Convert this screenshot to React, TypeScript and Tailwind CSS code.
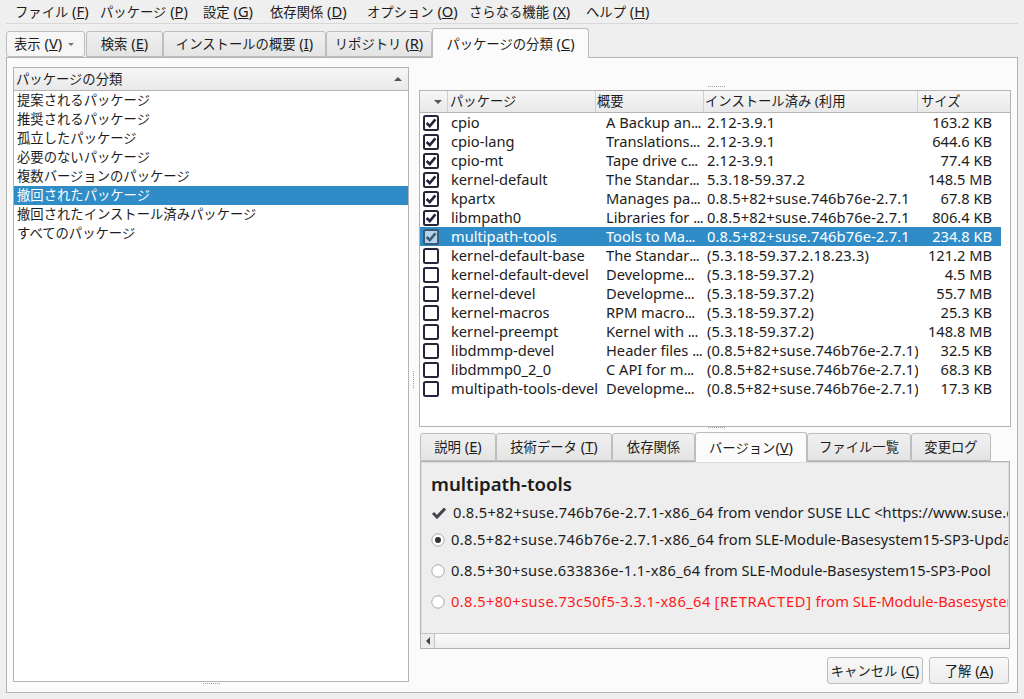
import React from 'react';

const rows = [
  { on: true, name: 'cpio', sum: 'A Backup an', ver: '2.12-3.9.1', size: '163.2 KB' },
  { on: true, name: 'cpio-lang', sum: 'Translations', ver: '2.12-3.9.1', size: '644.6 KB' },
  { on: true, name: 'cpio-mt', sum: 'Tape drive c', ver: '2.12-3.9.1', size: '77.4 KB' },
  { on: true, name: 'kernel-default', sum: 'The Standar', ver: '5.3.18-59.37.2', size: '148.5 MB' },
  { on: true, name: 'kpartx', sum: 'Manages pa', ver: '0.8.5+82+suse.746b76e-2.7.1', size: '67.8 KB' },
  { on: true, name: 'libmpath0', sum: 'Libraries for ', ver: '0.8.5+82+suse.746b76e-2.7.1', size: '806.4 KB' },
  { on: true, sel: true, name: 'multipath-tools', sum: 'Tools to Ma', ver: '0.8.5+82+suse.746b76e-2.7.1', size: '234.8 KB' },
  { on: false, name: 'kernel-default-base', sum: 'The Standar', ver: '(5.3.18-59.37.2.18.23.3)', size: '121.2 MB' },
  { on: false, name: 'kernel-default-devel', sum: 'Developme', ver: '(5.3.18-59.37.2)', size: '4.5 MB' },
  { on: false, name: 'kernel-devel', sum: 'Developme', ver: '(5.3.18-59.37.2)', size: '55.7 MB' },
  { on: false, name: 'kernel-macros', sum: 'RPM macro', ver: '(5.3.18-59.37.2)', size: '25.3 KB' },
  { on: false, name: 'kernel-preempt', sum: 'Kernel with ', ver: '(5.3.18-59.37.2)', size: '148.8 MB' },
  { on: false, name: 'libdmmp-devel', sum: 'Header files ', ver: '(0.8.5+82+suse.746b76e-2.7.1)', size: '32.5 KB' },
  { on: false, name: 'libdmmp0_2_0', sum: 'C API for m', ver: '(0.8.5+82+suse.746b76e-2.7.1)', size: '68.3 KB' },
  { on: false, name: 'multipath-tools-devel', sum: 'Developme', ver: '(0.8.5+82+suse.746b76e-2.7.1)', size: '17.3 KB' },
];

const filters = [
  '提案されるパッケージ',
  '推奨されるパッケージ',
  '孤立したパッケージ',
  '必要のないパッケージ',
  '複数バージョンのパッケージ',
  '撤回されたパッケージ',
  '撤回されたインストール済みパッケージ',
  'すべてのパッケージ',
];

// the CJK fallback renders smaller than the latin text in the reference
function J({ children }: { children: React.ReactNode }) {
  return <span className="text-[13.33px]">{children}</span>;
}

function Check({ on, sel }: { on: boolean; sel?: boolean }) {
  return (
    <svg width="16" height="16" viewBox="0 0 16 16" className="block">
      <rect x="1" y="1" width="14" height="14" rx="1.5" fill={sel ? '#b5d3e8' : '#fff'} stroke={sel ? '#3a5a78' : '#25253a'} strokeWidth="2" />
      {on && <path d="M3.6 8 L6.8 11 L12.4 4.4" fill="none" stroke={sel ? '#3a5a78' : '#25253a'} strokeWidth="2.6" />}
    </svg>
  );
}

function Radio({ on }: { on?: boolean }) {
  return (
    <svg width="14" height="14" viewBox="0 0 14 14" className="block shrink-0">
      <circle cx="7" cy="7" r="6.2" fill="#fff" stroke="#a8a8a8" />
      {on && <circle cx="7" cy="7" r="3" fill="#333" />}
    </svg>
  );
}

function Tab({ w, active, tall, children }: { w: string; active?: boolean; tall?: boolean; children: React.ReactNode }) {
  return (
    <div className={`${w} ${active ? 'h-[30px] bg-[#fbfbfb] border-b-0 z-10 -mb-px' : `${tall ? 'h-[28px]' : 'h-[26px]'} bg-gradient-to-b from-[#f0f0f0] to-[#e4e4e4]`} flex items-center justify-center border border-[#bdbdbd] rounded-t-[3px] whitespace-nowrap`}>
      {children}
    </div>
  );
}

function Dots({ className }: { className: string }) {
  return <div className={`absolute h-px w-[17px] border-t border-dotted border-[#a0a0a0] ${className}`} />;
}

export default function App() {
  return (
    <div className="relative flex h-[699px] w-[1024px] flex-col overflow-hidden bg-[#efefef] text-[14.67px] leading-[19px] text-[#1c1c1c] [font-family:'Noto_Sans','Noto_Sans_CJK_JP',sans-serif]">
      {/* menu bar */}
      <div className="mx-[6px] flex h-[24px] items-center whitespace-nowrap border-b border-[#d8d8d8] pl-[9px]">
        <span className="w-[85px]"><J>ファイル</J> (<u>F</u>)</span>
        <span className="w-[103px]"><J>パッケージ</J> (<u>P</u>)</span>
        <span className="w-[67px]"><J>設定</J> (<u>G</u>)</span>
        <span className="w-[97px]"><J>依存関係</J> (<u>D</u>)</span>
        <span className="w-[102px]"><J>オプション</J> (<u>O</u>)</span>
        <span className="w-[117px]"><J>さらなる機能</J> (<u>X</u>)</span>
        <span><J>ヘルプ</J> (<u>H</u>)</span>
      </div>

      {/* top tabs */}
      <div className="relative z-10 ml-[6px] mt-[3px] flex h-[30px] items-end">
        <div className="mr-px flex h-[26px] w-[79px] items-center rounded-[3px] border border-[#bdbdbd] bg-[#f6f6f6] pl-[7px]">
          <span><J>表示</J> (<u>V</u>)</span>
          <span className="ml-[6px] h-0 w-0 border-x-[3px] border-t-[3px] border-x-transparent border-t-[#777]" />
        </div>
        <Tab w="w-[77px]"><span><J>検索</J> (<u>E</u>)</span></Tab>
        <Tab w="w-[163px]"><span><J>インストールの概要</J> (<u>I</u>)</span></Tab>
        <Tab w="w-[106px]"><span><J>リポジトリ</J> (<u>R</u>)</span></Tab>
        <Tab w="w-[157px]" active><span><J>パッケージの分類</J> (<u>C</u>)</span></Tab>
      </div>

      {/* main panel */}
      <div className="relative mx-[6px] flex h-[636px] gap-[10px] border border-[#b4b4b4] bg-[#fbfbfb] pl-[6px] pt-[9px]">
        <div className="flex h-[615px] w-[396px] shrink-0 flex-col border border-[#b4b4b4] bg-white text-[13.33px]">
          <div className="flex h-[23px] shrink-0 items-center justify-between border-b border-[#b4b4b4] bg-gradient-to-b from-[#f6f6f6] to-[#e9e9e9] pl-[2px] pr-[6px]">
            パッケージの分類
            <span className="h-0 w-0 border-x-[4px] border-b-[4px] border-x-transparent border-b-[#555]" />
          </div>
          {filters.map((f, i) => (
            <div key={f} className={`h-[19px] pl-[3px] ${i === 5 ? 'bg-[#308cc6] text-white' : ''}`}>{f}</div>
          ))}
        </div>

        <div className="flex w-[592px] shrink-0 flex-col pt-[23px]">
          {/* package table */}
          <div className="h-[337px] shrink-0 border border-[#b4b4b4] bg-white">
            <div className="flex h-[22px] items-stretch border-b border-[#b4b4b4] bg-gradient-to-b from-[#f6f6f6] to-[#e9e9e9] text-[13.33px] leading-[21px]">
              <div className="flex w-[28px] items-center justify-end border-r border-[#d0d0d0] pr-[5px]">
                <span className="h-0 w-0 border-x-[4px] border-t-[4px] border-x-transparent border-t-[#555]" />
              </div>
              <div className="w-[148px] border-r border-[#d0d0d0] pl-[2px]">パッケージ</div>
              <div className="w-[108px] border-r border-[#d0d0d0] pl-px">概要</div>
              <div className="w-[214px] overflow-hidden whitespace-nowrap border-r border-[#d0d0d0] pl-px">インストール済み (利用</div>
              <div className="flex-1 pl-[3px]">サイズ</div>
            </div>
            {rows.map((r) => (
              <div key={r.name} className={`flex h-[19px] w-[581px] items-center whitespace-pre ${r.sel ? 'bg-[#308cc6] text-white' : ''}`}>
                <div className="w-[31px] shrink-0 pl-[3px]"><Check on={r.on} sel={r.sel} /></div>
                <div className="w-[155px] shrink-0">{r.name}</div>
                <div className="w-[101px] shrink-0 overflow-hidden">{r.sum}<span className="tracking-[-0.6px]">...</span></div>
                <div className="w-[211px] shrink-0 overflow-hidden tracking-[0.15px]">{r.ver}</div>
                <div className="flex-1 pr-[9px] text-right">{r.size}</div>
              </div>
            ))}
          </div>

          {/* detail tabs */}
          <div className="relative z-10 ml-px mt-[5px] flex h-[29px] items-end">
            <Tab w="w-[76px]" tall><span><J>説明</J> (<u>E</u>)</span></Tab>
            <Tab w="w-[116px]" tall><span><J>技術データ</J> (<u>T</u>)</span></Tab>
            <Tab w="w-[83px]" tall><J>依存関係</J></Tab>
            <Tab w="w-[112px]" active><span><J>バージョン</J>(<u>V</u>)</span></Tab>
            <Tab w="w-[104px]" tall><J>ファイル一覧</J></Tab>
            <Tab w="w-[80px]" tall><J>変更ログ</J></Tab>
          </div>

          {/* detail panel */}
          <div className="ml-px flex h-[188px] w-[590px] flex-col border border-[#b4b4b4] bg-[#eeeeee] shadow-[inset_0_0_0_1px_#dedede]">
            <div className="mr-px flex-1 overflow-hidden whitespace-nowrap pl-[10px]">
              <div className="mt-[10px] text-[18.67px] font-semibold leading-[24px]">multipath-tools</div>
              <div className="mt-[7px] flex h-[19px] items-center gap-[7px] pl-px">
                <svg width="14" height="12" viewBox="0 0 14 12" className="block shrink-0">
                  <path d="M1 6 L5 10 L13 1.5" fill="none" stroke="#44444f" strokeWidth="3" />
                </svg>
                <span><span className="tracking-[0.28px]">0.8.5+82+suse.746b76e-2.7.1-x86_64</span> from vendor SUSE LLC &lt;https://www.suse.com/&gt;</span>
              </div>
              <div className="mt-[8px] flex h-[19px] items-center gap-[6px]"><Radio on /><span><span className="tracking-[0.35px]">0.8.5+82+suse.746b76e-2.7.1-x86_64</span> from SLE-Module-Basesystem15-SP3-Updates</span></div>
              <div className="mt-[12px] flex h-[19px] items-center gap-[6px]"><Radio /><span><span className="tracking-[0.35px]">0.8.5+30+suse.633836e-1.1-x86_64</span> from SLE-Module-Basesystem15-SP3-Pool</span></div>
              <div className="mt-[12px] flex h-[19px] items-center gap-[6px] text-[#ff1a1a]"><Radio /><span><span className="tracking-[0.4px]">0.8.5+80+suse.73c50f5-3.3.1-x86_64</span> <span className="tracking-[0.7px]">[RETRACTED]</span> from SLE-Module-Basesystem15-SP3-Updates</span></div>
            </div>
            <div className="flex h-[15px] shrink-0 border-t border-[#c4c4c4] bg-[#ececec]">
              <div className="flex w-[14px] items-center justify-center border-r border-[#c4c4c4]">
                <span className="h-0 w-0 border-y-[4px] border-r-[4px] border-y-transparent border-r-[#444]" />
              </div>
              <div className="flex-1 bg-gradient-to-b from-[#fafafa] to-[#eeeeee]" />
            </div>
          </div>

          {/* buttons */}
          <div className="mt-[8px] flex justify-end gap-[6px] pr-[2px]">
            <button className="h-[27px] w-[96px] rounded-[3px] border border-[#bdbdbd] bg-gradient-to-b from-[#f8f8f8] to-[#ececec]"><J>キャンセル</J> (<u>C</u>)</button>
            <button className="h-[27px] w-[80px] rounded-[3px] border border-[#bdbdbd] bg-gradient-to-b from-[#f8f8f8] to-[#ececec]"><J>了解</J> (<u>A</u>)</button>
          </div>
        </div>

        <Dots className="left-[196px] top-[625px]" />
        <Dots className="left-[701px] top-[28px]" />
        <Dots className="left-[701px] top-[369px]" />
        <div className="absolute left-[406px] top-[313px] h-[17px] w-px border-l border-dotted border-[#a0a0a0]" />
      </div>
    </div>
  );
}
